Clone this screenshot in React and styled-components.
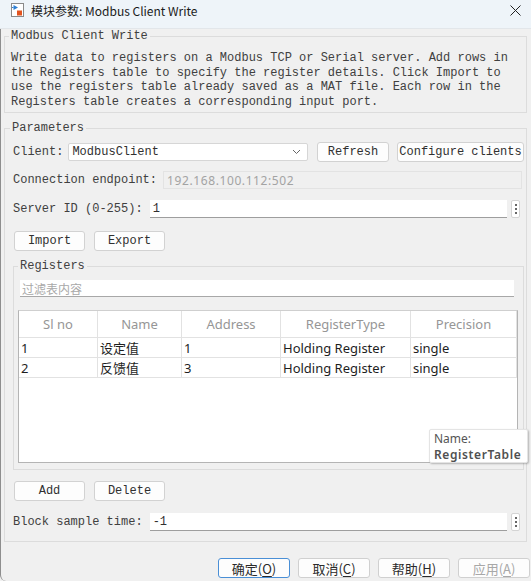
import React from "react";
import styled, { createGlobalStyle } from "styled-components";

const GlobalStyle = createGlobalStyle`
    html, body {
        margin: 0;
        padding: 0;
        background: #f0f0f0;
    }
    * {
        box-sizing: border-box;
    }
`

const mono = `"Liberation Mono", "Noto Sans CJK SC", monospace`;
const sans = `"Noto Sans", "Noto Sans CJK SC", sans-serif`;
const cjk = `"Noto Sans CJK SC", "Noto Sans", sans-serif`;

const Window = styled.div`
    width: 531px;
    height: 581px;
    display: flex;
    flex-direction: column;
    background: #f0f0f0;
    overflow: hidden;
`

const TitleBar = styled.div`
    height: 29px;
    flex: none;
    display: flex;
    align-items: center;
    padding: 0 10px 8px 11px;
    background: #eef4f9;
    border-bottom: 1px solid #e2e6ea;
    font-family: ${cjk};
    font-size: 12px;
    color: #1a1a1a;
`

const TitleText = styled.span`
    margin-left: 7px;
    flex: 1;
`

const Body = styled.div`
    flex: 1;
    padding: 0 4px 0 3px;
    border-left: 1px solid #8e8e8e;
    border-bottom-left-radius: 6px;
`

const Group = styled.fieldset`
    margin: ${p => p.$mt || 0}px 0 0 0;
    padding: ${p => p.$pad};
    border: 1px solid #dcdcdc;
    min-width: 0;
`

const Legend = styled.legend`
    padding: 0 2px;
    margin-left: ${p => p.$ml || 0}px;
    font-family: ${mono};
    font-size: 12px;
    line-height: 14px;
    color: #404040;
`

const Desc = styled.div`
    font-family: ${mono};
    font-size: 12px;
    line-height: 14.5px;
    color: #404040;
    white-space: pre;
`

const Row = styled.div`
    display: flex;
    align-items: center;
    height: 20px;
    margin-top: ${p => p.$mt || 0}px;
`

const Label = styled.span`
    font-family: ${mono};
    font-size: 12px;
    color: #404040;
    white-space: pre;
    margin-right: ${p => p.$mr}px;
`

const Select = styled.div`
    width: 240px;
    height: 18px;
    display: flex;
    align-items: center;
    justify-content: space-between;
    padding: 0 6px 0 3px;
    background: #fff;
    border: 1px solid #d6d6d6;
    border-radius: 2px;
    font-family: ${mono};
    font-size: 12px;
    color: #303030;
`

const Button = styled.div`
    width: ${p => p.$w}px;
    height: 20px;
    flex: none;
    margin-left: ${p => p.$ml || 0}px;
    display: flex;
    align-items: center;
    justify-content: center;
    background: #fdfdfd;
    border: 1px solid #d2d2d2;
    border-radius: 3px;
    font-family: ${mono};
    font-size: 12px;
    color: #303030;
    white-space: pre;
`

const DisabledField = styled.div`
    flex: 1;
    height: 18px;
    margin-right: 2px;
    display: flex;
    align-items: center;
    padding-left: 3px;
    border: 1px solid #e3e3e3;
    font-family: ${sans};
    font-size: 12px;
    letter-spacing: 0.6px;
    color: #a3a3a3;
`

const Input = styled.div`
    flex: 1;
    height: 18px;
    display: flex;
    align-items: center;
    padding-left: 3px;
    background: #fff;
    border-bottom: 1px solid #9e9e9e;
    font-family: ${mono};
    font-size: 12px;
    color: #303030;
`

const DotsButton = styled.div`
    width: 9px;
    height: 18px;
    flex: none;
    margin: 0 4px 0 4px;
    display: flex;
    flex-direction: column;
    align-items: center;
    justify-content: center;
    gap: 2px;
    background: #fff;
    border: 1px solid #d4d4d4;
    border-radius: 2px;

    span {
        width: 2px;
        height: 2px;
        border-radius: 1px;
        background: #333;
    }
`

const Filter = styled.div`
    height: 17px;
    margin: 0 3px 0 2px;
    display: flex;
    align-items: center;
    padding-left: 2px;
    background: #fff;
    border-bottom: 1px solid #a8a8a8;
    font-family: ${cjk};
    font-size: 12px;
    color: #a8a8a8;
`

const Table = styled.div`
    position: relative;
    width: 500px;
    height: 153px;
    margin-top: 13px;
    background: #fff;
    border: 1px solid #b4b4b4;
    border-top-color: #cfcfcf;
`

const TRow = styled.div`
    display: flex;
    height: ${p => p.$h}px;
`

const Cell = styled.div`
    width: ${p => p.$w}px;
    display: flex;
    align-items: center;
    justify-content: ${p => p.$head ? "center" : "flex-start"};
    padding-left: ${p => p.$head ? 0 : 2}px;
    border-right: 1px solid #e2e2e2;
    border-bottom: 1px solid #e2e2e2;
    font-family: ${sans};
    font-size: 13px;
    color: ${p => p.$head ? "#969696" : "#1e1e1e"};
    white-space: nowrap;
`

const Tooltip = styled.div`
    position: absolute;
    right: -11px;
    bottom: -1px;
    width: 99px;
    height: 34px;
    padding: 1px 0 0 4px;
    background: #fff;
    border: 1px solid #e4e4e4;
    border-radius: 2px;
    box-shadow: 1px 1px 2px rgba(0, 0, 0, 0.25);
    font-family: ${sans};
    font-size: 12px;
    line-height: 16px;
    color: #555;

    div {
        height: 16px;
    }

    b {
        display: block;
        height: 16px;
        font-weight: 600;
        letter-spacing: 0.6px;
        color: #505050;
    }
`

const Footer = styled.div`
    display: flex;
    justify-content: flex-end;
    gap: 8px;
    margin: 16px -3px 0 0;
`

const DialogButton = styled.div`
    width: 72px;
    height: 20px;
    display: flex;
    align-items: center;
    justify-content: center;
    background: #fdfdfd;
    border: 1px solid ${p => p.$primary ? "#4a8fd6" : "#d0d0d0"};
    border-radius: 3px;
    font-family: ${cjk};
    font-size: 13px;
    color: ${p => p.$disabled ? "#a8a8a8" : "#2a2a2a"};

    u {
        text-underline-offset: 2px;
    }
`

const columns = [
    { key: "no", title: "Sl no", w: 79 },
    { key: "name", title: "Name", w: 84 },
    { key: "addr", title: "Address", w: 99 },
    { key: "type", title: "RegisterType", w: 130 },
    { key: "prec", title: "Precision", w: 106 },
];

const registers = [
    { no: "1", name: "设定值", addr: "1", type: "Holding Register", prec: "single" },
    { no: "2", name: "反馈值", addr: "3", type: "Holding Register", prec: "single" },
];

const description = [
    "Write data to registers on a Modbus TCP or Serial server. Add rows in",
    "the Registers table to specify the register details. Click Import to",
    "use the registers table already saved as a MAT file. Each row in the",
    "Registers table creates a corresponding input port.",
];

function BlockIcon() {
    return (
        <svg width="13" height="14" viewBox="0 0 13 14">
            <rect x="0.5" y="0.5" width="12" height="13" fill="#fff" stroke="#8a8a8a" />
            <path d="M2.5 2 L7 4.5 L2.5 7 Z" fill="#2d7fd3" />
            <path d="M2.5 4.5 H1" stroke="#2d7fd3" />
            <rect x="6" y="7.5" width="5" height="5" fill="#e2531f" />
        </svg>
    );
}

function CloseIcon() {
    return (
        <svg width="11" height="11" viewBox="0 0 11 11">
            <path d="M0.5 0.5 L10.5 10.5 M10.5 0.5 L0.5 10.5" stroke="#222" strokeWidth="1" />
        </svg>
    );
}

function Chevron() {
    return (
        <svg width="9" height="6" viewBox="0 0 9 6">
            <path d="M1 1 L4.5 4.5 L8 1" fill="none" stroke="#666" strokeWidth="1" />
        </svg>
    );
}

function Dots() {
    return (
        <DotsButton>
            <span /><span /><span />
        </DotsButton>
    );
}

function App() {
    return (
        <Window>
            <GlobalStyle />
            <TitleBar>
                <BlockIcon />
                <TitleText>模块参数: Modbus Client Write</TitleText>
                <CloseIcon />
            </TitleBar>
            <Body>
                <Group $pad="8px 2px 3px 6px">
                    <Legend $ml={-2}>Modbus Client Write</Legend>
                    <Desc>
                        {description.map(line => <div key={line}>{line}</div>)}
                    </Desc>
                </Group>

                <Group $mt={8} $pad="7px 2px 9px 8px">
                    <Legend $ml={-3}>Parameters</Legend>
                    <Row>
                        <Label $mr={5}>Client:</Label>
                        <Select>
                            ModbusClient
                            <Chevron />
                        </Select>
                        <Button $w={72} $ml={9}>Refresh</Button>
                        <Button $w={127} $ml={8}>Configure clients</Button>
                    </Row>
                    <Row $mt={8}>
                        <Label $mr={6}>Connection endpoint:</Label>
                        <DisabledField>192.168.100.112:502</DisabledField>
                    </Row>
                    <Row $mt={9}>
                        <Label $mr={7}>Server ID (0-255):</Label>
                        <Input>1</Input>
                        <Dots />
                    </Row>
                    <Row $mt={12}>
                        <Button $w={71} $ml={1}>Import</Button>
                        <Button $w={71} $ml={9}>Export</Button>
                    </Row>

                    <Group $mt={8} $pad="7px 6px 6px 4px">
                        <Legend $ml={0}>Registers</Legend>
                        <Filter>过滤表内容</Filter>
                        <Table>
                            <TRow $h={27}>
                                {columns.map(c => (
                                    <Cell key={c.key} $w={c.w} $head>{c.title}</Cell>
                                ))}
                            </TRow>
                            {registers.map(r => (
                                <TRow key={r.no} $h={20}>
                                    {columns.map(c => (
                                        <Cell key={c.key} $w={c.w}>{r[c.key]}</Cell>
                                    ))}
                                </TRow>
                            ))}
                            <Tooltip>
                                <div>Name:</div>
                                <b>RegisterTable</b>
                            </Tooltip>
                        </Table>
                    </Group>

                    <Row $mt={11}>
                        <Button $w={71} $ml={1}>Add</Button>
                        <Button $w={71} $ml={9}>Delete</Button>
                    </Row>
                    <Row $mt={11}>
                        <Label $mr={7}>Block sample time:</Label>
                        <Input>-1</Input>
                        <Dots />
                    </Row>
                </Group>

                <Footer>
                    <DialogButton $primary>确定(<u>O</u>)</DialogButton>
                    <DialogButton>取消(<u>C</u>)</DialogButton>
                    <DialogButton>帮助(<u>H</u>)</DialogButton>
                    <DialogButton $disabled>应用(<u>A</u>)</DialogButton>
                </Footer>
            </Body>
        </Window>
    );
}

export default App;
